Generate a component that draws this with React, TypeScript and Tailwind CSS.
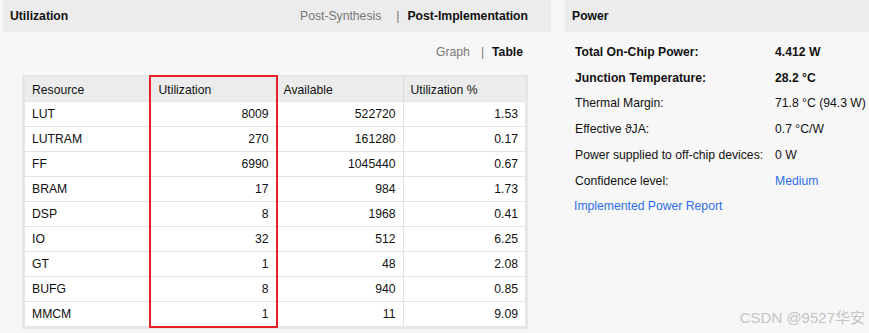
import React from "react";

const rows = [
  ["LUT", "8009", "522720", "1.53"],
  ["LUTRAM", "270", "161280", "0.17"],
  ["FF", "6990", "1045440", "0.67"],
  ["BRAM", "17", "984", "1.73"],
  ["DSP", "8", "1968", "0.41"],
  ["IO", "32", "512", "6.25"],
  ["GT", "1", "48", "2.08"],
  ["BUFG", "8", "940", "0.85"],
  ["MMCM", "1", "11", "9.09"],
];

const power: { label: string; value: string; bold?: boolean; link?: boolean }[] = [
  { label: "Total On-Chip Power:", value: "4.412 W", bold: true },
  { label: "Junction Temperature:", value: "28.2 °C", bold: true },
  { label: "Thermal Margin:", value: "71.8 °C (94.3 W)" },
  { label: "Effective ϑJA:", value: "0.7 °C/W" },
  { label: "Power supplied to off-chip devices:", value: "0 W" },
  { label: "Confidence level:", value: "Medium", link: true },
];

function UtilizationPanel() {
  return (
    <div className="w-[548px] ml-[3px] flex flex-col">
      <div className="h-8 bg-[#ececec] flex items-center justify-between pl-[7px] pr-[23px]">
        <span className="font-bold text-[#111]">Utilization</span>
        <div className="flex items-center">
          <span className="text-[#777]">Post-Synthesis</span>
          <span className="text-[#777] ml-[15px] mr-[8px]">|</span>
          <span className="font-bold text-[#111]">Post-Implementation</span>
        </div>
      </div>
      <div className="flex justify-end items-center h-[40px] pr-[28px] pt-[1px]">
        <span className="text-[#777]">Graph</span>
        <span className="text-[#777] ml-[11px] mr-[8px]">|</span>
        <span className="font-bold text-[#111]">Table</span>
      </div>
      <div className="ml-[19px] mt-[3px] w-[506px] border-[3px] border-[#e6e6e6] border-t-2 relative">
        <table className="w-[500px] border-collapse table-fixed leading-[14px]">
          <colgroup>
            <col className="w-[124px]" />
            <col className="w-[127px]" />
            <col className="w-[127px]" />
            <col className="w-[122px]" />
          </colgroup>
          <thead>
            <tr className="h-[24px] bg-[#ececec]">
              {["Resource", "Utilization", "Available", "Utilization %"].map((h, i) => (
                <th
                  key={h}
                  className={`text-left font-normal px-[7px] pt-[2px] text-[#111] ${i === 1 ? "pl-[9px]" : ""} ${i > 0 ? "border-l border-[#dcdcdc]" : ""}`}
                >
                  {h}
                </th>
              ))}
            </tr>
          </thead>
          <tbody>
            {rows.map((r) => (
              <tr key={r[0]} className="h-[25px] bg-white border-t border-[#e3e3e3]">
                {r.map((c, i) => (
                  <td
                    key={i}
                    className={`px-[7px] pt-[1px] text-[#111] ${i === 0 ? "text-left" : "text-right border-l border-[#e3e3e3]"}`}
                  >
                    {c}
                  </td>
                ))}
              </tr>
            ))}
          </tbody>
        </table>
        {/* red annotation box around the Utilization column */}
        <div className="absolute left-[124px] top-[-2px] w-[129px] h-[253px] border-2 border-[#e8202a] pointer-events-none" />
      </div>
    </div>
  );
}

function PowerPanel() {
  return (
    <div className="w-[304px] ml-[14px] flex flex-col">
      <div className="h-8 bg-[#ececec] flex items-center pl-[7px]">
        <span className="font-bold text-[#111]">Power</span>
      </div>
      <div className="pl-[10px] pt-[7px] flex flex-col">
        {power.map((p) => (
          <div key={p.label} className="flex items-center h-[25.8px]">
            <span className={`w-[200px] text-[#111] ${p.bold ? "font-bold" : ""}`}>{p.label}</span>
            <span
              className={`${p.bold ? "font-bold text-[#111]" : p.link ? "text-[#2d6ee6]" : "text-[#111]"} whitespace-nowrap`}
            >
              {p.value}
            </span>
          </div>
        ))}
        <div className="h-[25px] flex items-center -ml-[1px] text-[#2d6ee6]">Implemented Power Report</div>
      </div>
    </div>
  );
}

export default function App() {
  return (
    <div className="w-[869px] h-[333px] bg-[#f7f7f7] relative overflow-hidden font-['Liberation_Sans',Arial,sans-serif] text-[12.2px]">
      <div className="flex">
        <UtilizationPanel />
        <PowerPanel />
      </div>
      <div className="absolute right-[4px] bottom-[4px] text-[15px] text-[#c4c4c4] font-['Liberation_Sans','Noto_Sans_CJK_SC',sans-serif]">
        CSDN @9527华安
      </div>
    </div>
  );
}
